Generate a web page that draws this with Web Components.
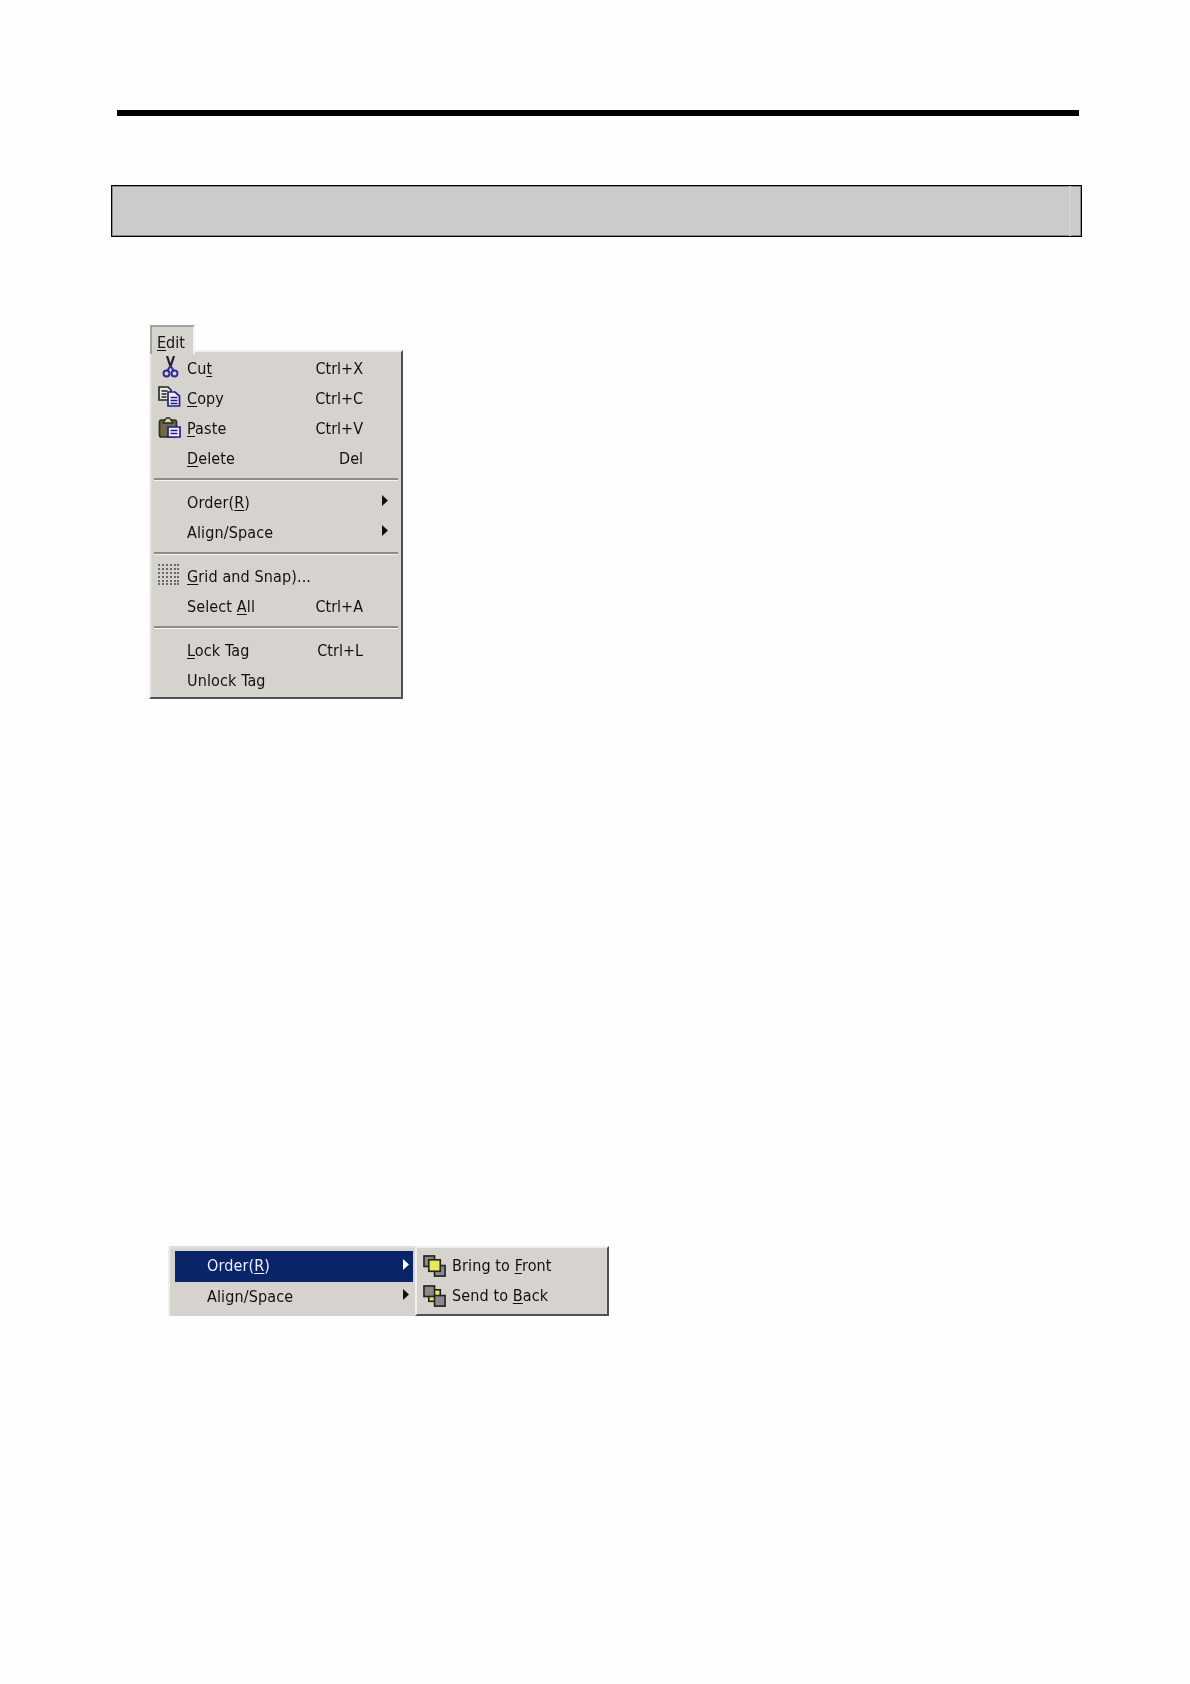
<!DOCTYPE html>
<html>
<head>
<meta charset="utf-8">
<title>Edit menu</title>
<style>
  html, body { margin: 0; background: #fefefe; }
  body { font-family: "DejaVu Sans Condensed", "DejaVu Sans", "Liberation Sans", sans-serif; }
</style>
</head>
<body>
<doc-page>
  <doc-rule></doc-rule>
  <doc-banner></doc-banner>

  <menu-figure tab="Edit">
    <win-menu>
      <win-item icon="cut" shortcut="Ctrl+X">Cu<u>t</u></win-item>
      <win-item icon="copy" shortcut="Ctrl+C"><u>C</u>opy</win-item>
      <win-item icon="paste" shortcut="Ctrl+V"><u>P</u>aste</win-item>
      <win-item shortcut="Del"><u>D</u>elete</win-item>
      <win-sep></win-sep>
      <win-item arrow>Order(<u>R</u>)</win-item>
      <win-item arrow>Align/Space</win-item>
      <win-sep></win-sep>
      <win-item icon="grid"><u>G</u>rid and Snap)...</win-item>
      <win-item shortcut="Ctrl+A">Select <u>A</u>ll</win-item>
      <win-sep></win-sep>
      <win-item shortcut="Ctrl+L"><u>L</u>ock Tag</win-item>
      <win-item>Unlock Tag</win-item>
    </win-menu>
  </menu-figure>

  <submenu-figure>
    <win-item slot="main" arrow active>Order(<u>R</u>)</win-item>
    <win-item slot="main" arrow>Align/Space</win-item>
    <win-item slot="sub" icon="front" compact>Bring to <u>F</u>ront</win-item>
    <win-item slot="sub" icon="back" compact>Send to <u>B</u>ack</win-item>
  </submenu-figure>
</doc-page>

<script>
const ICONS = {
  cut: `<svg width="24" height="22" viewBox="0 0 24 22">
    <path d="M9 0l3.500 10.500M16 0l-3.500 10.500" stroke="#222" stroke-width="2.200" fill="none"/>
    <path d="M12 10.500l-2.500 4M13 10.500l2.500 4" stroke="#2a2a9a" stroke-width="2" fill="none"/>
    <circle cx="8.500" cy="17.500" r="3" fill="none" stroke="#2a2a9a" stroke-width="1.900"/>
    <circle cx="16.500" cy="17.500" r="3" fill="none" stroke="#2a2a9a" stroke-width="1.900"/>
  </svg>`,
  copy: `<svg width="24" height="22" viewBox="0 0 24 22">
    <path d="M1 1h9l3 3v10H1z" fill="#e9e8e2" stroke="#222" stroke-width="1.600"/>
    <path d="M3.500 5h6M3.500 8h5M3.500 11h5" stroke="#222" stroke-width="1.300"/>
    <path d="M10 6h7l4.500 4v10H10z" fill="#f0f0f4" stroke="#22228a" stroke-width="1.700"/>
    <path d="M12.500 11.500h7M12.500 14.500h7M12.500 17.500h7" stroke="#22228a" stroke-width="1.300"/>
  </svg>`,
  paste: `<svg width="24" height="24" viewBox="0 0 24 24">
    <rect x="1.500" y="4" width="17" height="17" rx="2" fill="#6f6a4c" stroke="#2b2b22" stroke-width="1.700"/>
    <path d="M5 7l3.500-5h3L15 7z" fill="#d8d49a" stroke="#2b2b22" stroke-width="1.300"/>
    <path d="M10 11h12v10H10z" fill="#f2f2f6" stroke="#22228a" stroke-width="1.700"/>
    <path d="M12.500 14.500h7M12.500 17.500h7" stroke="#22228a" stroke-width="1.400"/>
  </svg>`,
  grid: `<svg width="21" height="21" viewBox="0 0 21 21" fill="#6a6a6a">
    ${[1, 5, 9, 13, 17, 20].map(y => [1, 5, 9, 13, 17, 20].map(x =>
      `<rect x="${x - 1}" y="${y - 1}" width="2" height="2"/>`).join("")).join("")}
  </svg>`,
  front: `<svg width="24" height="23" viewBox="0 0 25 24">
    <rect x="1" y="1" width="11" height="11" fill="#8a8a8a" stroke="#222" stroke-width="1.700"/>
    <rect x="12" y="11" width="11" height="11" fill="#8a8a8a" stroke="#222" stroke-width="1.700"/>
    <rect x="6" y="5" width="12" height="12" fill="#e8e85a" stroke="#222" stroke-width="1.700"/>
  </svg>`,
  back: `<svg width="24" height="23" viewBox="0 0 25 24">
    <rect x="6" y="5" width="12" height="12" fill="#e8e85a" stroke="#222" stroke-width="1.700"/>
    <rect x="1" y="1" width="11" height="11" fill="#8a8a8a" stroke="#222" stroke-width="1.700"/>
    <rect x="12" y="11" width="11" height="11" fill="#8a8a8a" stroke="#222" stroke-width="1.700"/>
  </svg>`
};

class DocPage extends HTMLElement {
  constructor() {
    super();
    this.attachShadow({ mode: "open" }).innerHTML = `
      <style>
        :host { display: flex; flex-direction: column; width: 1190px; height: 1684px;
                padding-top: 110px; box-sizing: border-box; overflow: hidden; }
      </style>
      <slot></slot>`;
  }
}

class DocRule extends HTMLElement {
  constructor() {
    super();
    this.attachShadow({ mode: "open" }).innerHTML = `
      <style>
        :host { display: block; width: 962px; height: 6px; margin-left: 117px; background: #000; }
      </style>`;
  }
}

class DocBanner extends HTMLElement {
  constructor() {
    super();
    this.attachShadow({ mode: "open" }).innerHTML = `
      <style>
        :host { display: block; width: 971px; height: 52px; margin: 69px 0 0 111px;
                box-sizing: border-box; border: 1px solid #000; background: #cbcbcb;
                box-shadow: inset 0 0 0 1px #8a8a8a; }
        div { height: 100%; width: 12px; margin-left: auto;
              border-left: 2px solid #d2d2d2; box-sizing: border-box; }
      </style>
      <div></div>`;
  }
}

class MenuFigure extends HTMLElement {
  constructor() {
    super();
    this.attachShadow({ mode: "open" }).innerHTML = `
      <style>
        :host { display: block; width: 254px; margin: 88px 0 0 149px; position: relative;
                filter: blur(0.4px); }
        .tab { position: absolute; left: 1px; top: 0; width: 45px; height: 29px; z-index: 1;
               box-sizing: border-box; padding: 7px 0 0 5px; background: #d6d3ce;
               border: 2px solid; border-color: #a3a39f #f4f3f0 #f4f3f0 #a3a39f; border-bottom: 0;
               font-size: 16px; line-height: 18px; color: #111; }
        .tab u { text-underline-offset: 2px; }
        .body { padding-top: 25px; }
      </style>
      <div class="tab"><u>E</u>dit</div>
      <div class="body"><slot></slot></div>`;
  }
}

class WinMenu extends HTMLElement {
  constructor() {
    super();
    this.attachShadow({ mode: "open" }).innerHTML = `
      <style>
        :host { display: block; box-sizing: border-box; padding: 2px 1px 1px 1px;
                background: #d6d3ce; border: 2px solid;
                border-color: #f0efec #505050 #505050 #f0efec; }
      </style>
      <slot></slot>`;
  }
}

class WinSep extends HTMLElement {
  constructor() {
    super();
    this.attachShadow({ mode: "open" }).innerHTML = `
      <style>
        :host { display: block; height: 3px; margin: 4px 2px 7px 2px;
                background: linear-gradient(#8c8b88 66%, #f4f3f0 66%); }
      </style>`;
  }
}

class WinItem extends HTMLElement {
  constructor() {
    super();
    const icon = ICONS[this.getAttribute("icon")] || "";
    const shortcut = this.getAttribute("shortcut") || "";
    const arrow = this.hasAttribute("arrow")
      ? `<svg class="arrow" width="6" height="11" viewBox="0 0 6 11"><path d="M0 0l6 5.500-6 5.500z"/></svg>` : "";
    this.attachShadow({ mode: "open" }).innerHTML = `
      <style>
        :host { display: flex; align-items: center; height: 30px; position: relative;
                padding-left: var(--item-indent, 35px); font-size: 16px; color: #111; white-space: nowrap;
                fill: #111; }
        :host([active]) { background: #0a246a; color: #eef; fill: #fff; height: 31px; }
        :host([compact]) { padding-left: 33px; }
        .ic { position: absolute; left: 6px; top: 2px; width: 25px; height: 26px; }
        :host([compact]) .ic { left: 4px; top: 4px; }
        .label { flex: 1; margin-top: -2px; letter-spacing: 0.12px; }
        ::slotted(u) { text-underline-offset: 2px; }
        .key { margin-right: 37px; margin-top: -2px; }
        .arrow { margin-right: var(--arrow-gap, 12px); margin-top: -5px; }
      </style>
      <span class="ic">${icon}</span>
      <span class="label"><slot></slot></span>
      ${shortcut ? `<span class="key">${shortcut}</span>` : ""}
      ${arrow}`;
  }
}

class SubmenuFigure extends HTMLElement {
  constructor() {
    super();
    this.attachShadow({ mode: "open" }).innerHTML = `
      <style>
        :host { display: flex; width: 442px; height: 70px; margin: 547px 0 0 168px;
                filter: blur(0.4px); --item-indent: 32px; --arrow-gap: 4px; }
        .main { width: 247px; height: 70px; box-sizing: border-box; padding: 5px 2px 0 5px;
                background: linear-gradient(#e4e2de, #d6d3ce 4px); border-left: 2px solid #efeeeb; }
        .sub { width: 194px; height: 70px; box-sizing: border-box; padding: 3px 2px 0 2px;
               background: #d6d3ce; border: 2px solid;
               border-color: #f0efec #505050 #505050 #f0efec; }
      </style>
      <div class="main"><slot name="main"></slot></div>
      <div class="sub"><slot name="sub"></slot></div>`;
  }
}

customElements.define("doc-page", DocPage);
customElements.define("doc-rule", DocRule);
customElements.define("doc-banner", DocBanner);
customElements.define("menu-figure", MenuFigure);
customElements.define("win-menu", WinMenu);
customElements.define("win-sep", WinSep);
customElements.define("win-item", WinItem);
customElements.define("submenu-figure", SubmenuFigure);
</script>
</body>
</html>
